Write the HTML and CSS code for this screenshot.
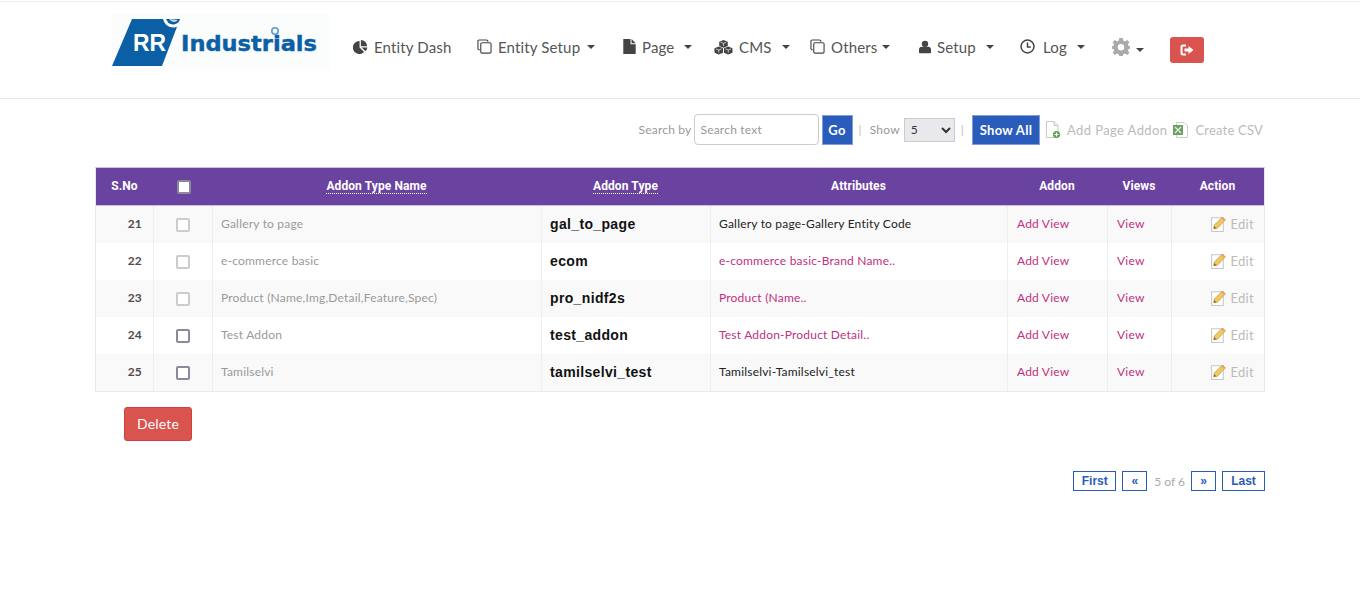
FILE: index.html
```html
<!DOCTYPE html>
<html>
	<head>
		<meta charset="UTF-8">
		<title>Page Addon</title>
		<link rel="stylesheet" href="styles.css">
	</head>
	<body>
		<header class="topbar">
			<a class="logo" href="#">
				<svg width="219" height="57" viewBox="0 0 219 57">
					<rect width="219" height="57" fill="#fbfcfc"/>
					<path d="M21 5H69L51 52H1Z" fill="#0b5fa5"/>
					<path d="M53 3Q55 12 62 12Q67 12 71 7" fill="none" stroke="#fff" stroke-width="3"/>
					<path d="M58 5Q60 8 63 8Q65 8 67 6Z" fill="#cfd8dd"/>
					<text x="22" y="37" class="logo-rr" textLength="33" lengthAdjust="spacingAndGlyphs">RR</text>
					<text x="70" y="37" class="logo-name" textLength="136" lengthAdjust="spacingAndGlyphs">Industrials</text>
					<rect x="159" y="21" width="4" height="4" fill="#fbfcfc"/>
					<circle cx="164" cy="17" r="3.2" fill="none" stroke="#5b9bd0" stroke-width="1.6"/>
				</svg>
			</a>
			<nav class="nav">
				<a href="#"><svg class="ico" viewBox="0 0 16 16"><path d="M7 2.2V9l4.800 4.800A6.900 6.900 0 1 1 7 2.200Z M8.400 1V7.600H15A6.700 6.700 0 0 0 8.400 1Z M9.200 9H15.400A7 7 0 0 1 13.200 13Z"/></svg>Entity Dash</a>
				<a href="#"><svg class="ico line" viewBox="0 0 16 16"><path d="M3 11.500H2.300A1.300 1.300 0 0 1 1 10.200V2.300A1.300 1.300 0 0 1 2.300 1H10.200A1.300 1.300 0 0 1 11.500 2.300V3"/><rect x="4" y="4" width="11" height="11" rx="1.400"/></svg>Entity Setup<i class="caret"></i></a>
				<a href="#"><svg class="ico doc" viewBox="2 1 12 14.500"><path d="M2 1H9V6H14V15.500H2Z M10 1L14 5H10Z"/></svg>Page<i class="caret wide"></i></a>
				<a href="#"><svg class="ico cubes" viewBox="0 0 20 16"><path d="M10 0.500L14.500 2.400V7L10 8.800L5.500 7V2.400Z M5 7.500L9.500 9.400V14L5 15.800L0.500 14V9.400Z M15 7.500L19.500 9.400V14L15 15.800L10.500 14V9.400Z"/><path d="M7 3L10 4.200L13 3M10 4.200V7M2 10L5 11.200L8 10M5 11.200V14M12 10L15 11.200L18 10M15 11.200V14" fill="none" stroke="#fff" stroke-width=".7"/></svg>CMS<i class="caret wide"></i></a>
				<a href="#"><svg class="ico line" viewBox="0 0 16 16"><path d="M3 11.500H2.300A1.300 1.300 0 0 1 1 10.200V2.300A1.300 1.300 0 0 1 2.300 1H10.200A1.300 1.300 0 0 1 11.500 2.300V3"/><rect x="4" y="4" width="11" height="11" rx="1.400"/></svg>Others<i class="caret tight"></i></a>
				<a href="#"><svg class="ico user" viewBox="1 .8 14 14.700"><circle cx="8" cy="4.500" r="3.700"/><path d="M2 15.500A1.500 1.500 0 0 1 1 14V11.500Q1 8.300 4 8H12Q15 8.300 15 11.500V14A1.500 1.500 0 0 1 14 15.500Z"/></svg>Setup<i class="caret wide"></i></a>
				<a href="#"><svg class="ico line clock" viewBox="0 0 16 16"><circle cx="8" cy="8" r="6.900"/><path d="M8 3.800V8.600H11.500"/></svg>Log<i class="caret wide"></i></a>
				<a href="#" class="gear"><svg class="ico gear-ico" viewBox="0 0 18 18"><path fill-rule="evenodd" d="M7.300 0H10.700L11.200 2.600L13 3.400L15.200 1.900L17.400 4.200L15.900 6.300L16.600 8L18 8.300V10.700L16.600 11L15.900 12.700L17.400 14.800L15.200 17L13 15.600L11.200 16.400L10.700 18H7.300L6.800 16.400L5 15.600L2.800 17L0.600 14.800L2.100 12.700L1.400 11L0 10.700V8.300L1.400 8L2.100 6.300L0.600 4.200L2.800 1.900L5 3.400L6.800 2.600ZM9 6A3.200 3.200 0 1 0 9 12.400A3.200 3.200 0 1 0 9 6Z"/></svg><i class="caret low"></i></a>
				<a href="#" class="logout"><svg width="14" height="12" viewBox="0 0 14 12"><path d="M6 1.500H3Q1.500 1.500 1.500 3V9Q1.500 10.500 3 10.500H6" fill="none" stroke="#fff" stroke-width="2"/><path d="M4.500 4.500H8.500V2L13.500 6L8.500 10V7.500H4.500Z" fill="#fff"/></svg></a>
			</nav>
		</header>

		<main class="content">
			<form class="tools" onsubmit="return false;">
				<label>Search by</label>
				<input type="text" class="search" placeholder="Search text">
				<button class="blue go">Go</button>
				<span class="sep">|</span>
				<label>Show</label>
				<select class="show"><option>5</option><option>10</option></select>
				<span class="sep">|</span>
				<button class="blue all">Show All</button>
				<a href="#" class="tool-link add"><svg width="17" height="18" viewBox="0 0 17 18"><path d="M2.500 .5H10L14 4.500V16.500H2.500Z" fill="#fff" stroke="#c8c8c8"/><path d="M10 .5V4.500H14" fill="#eee" stroke="#c8c8c8"/><circle cx="12.500" cy="13.500" r="3.500" fill="#5aa84a"/><path d="M10.500 13.500H14.500M12.500 11.500V15.500" stroke="#fff"/></svg>Add Page Addon</a>
				<a href="#" class="tool-link csv"><svg width="17" height="16" viewBox="0 0 17 16"><path d="M4.500 .5H12L15.500 4V15.500H4.500Z" fill="#fff" stroke="#ccc"/><rect x="1" y="3" width="10" height="10" fill="#6d9f63"/><path d="M3 5L9 11M9 5L3 11" stroke="#dfeedd" stroke-width="1.300"/></svg>Create CSV</a>
			</form>

			<table class="grid">
				<colgroup>
					<col class="c-no"><col class="c-chk"><col class="c-name"><col class="c-type"><col class="c-attr"><col class="c-addon"><col class="c-views"><col class="c-act">
				</colgroup>
				<thead>
					<tr>
						<th>S.No</th>
						<th class="head-chk"><span class="tick"></span></th>
						<th><a href="#">Addon Type Name</a></th>
						<th><a href="#">Addon Type</a></th>
						<th>Attributes</th>
						<th>Addon</th>
						<th>Views</th>
						<th>Action</th>
					</tr>
				</thead>
				<tbody>
					<tr>
						<td class="no">21</td><td class="chk"><span class="box off"></span></td><td class="name">Gallery to page</td><td class="code">gal_to_page</td><td class="attr">Gallery to page-Gallery Entity Code</td><td class="lnk"><a href="#">Add View</a></td><td class="lnk"><a href="#">View</a></td><td class="act"><span class="edit"><svg class="pencil" width="17" height="17" viewBox="0 0 16 16"><use href="#pencil"/></svg>Edit</span></td>
					</tr>
					<tr>
						<td class="no">22</td><td class="chk"><span class="box off"></span></td><td class="name">e-commerce basic</td><td class="code">ecom</td><td class="attr"><a href="#">e-commerce basic-Brand Name..</a></td><td class="lnk"><a href="#">Add View</a></td><td class="lnk"><a href="#">View</a></td><td class="act"><span class="edit"><svg class="pencil" width="17" height="17" viewBox="0 0 16 16"><use href="#pencil"/></svg>Edit</span></td>
					</tr>
					<tr>
						<td class="no">23</td><td class="chk"><span class="box off"></span></td><td class="name">Product (Name,Img,Detail,Feature,Spec)</td><td class="code">pro_nidf2s</td><td class="attr"><a href="#">Product (Name..</a></td><td class="lnk"><a href="#">Add View</a></td><td class="lnk"><a href="#">View</a></td><td class="act"><span class="edit"><svg class="pencil" width="17" height="17" viewBox="0 0 16 16"><use href="#pencil"/></svg>Edit</span></td>
					</tr>
					<tr>
						<td class="no">24</td><td class="chk"><span class="box"></span></td><td class="name">Test Addon</td><td class="code">test_addon</td><td class="attr"><a href="#">Test Addon-Product Detail..</a></td><td class="lnk"><a href="#">Add View</a></td><td class="lnk"><a href="#">View</a></td><td class="act"><span class="edit"><svg class="pencil" width="17" height="17" viewBox="0 0 16 16"><use href="#pencil"/></svg>Edit</span></td>
					</tr>
					<tr>
						<td class="no">25</td><td class="chk"><span class="box"></span></td><td class="name">Tamilselvi</td><td class="code">tamilselvi_test</td><td class="attr">Tamilselvi-Tamilselvi_test</td><td class="lnk"><a href="#">Add View</a></td><td class="lnk"><a href="#">View</a></td><td class="act"><span class="edit"><svg class="pencil" width="17" height="17" viewBox="0 0 16 16"><use href="#pencil"/></svg>Edit</span></td>
					</tr>
				</tbody>
			</table>

			<button class="delete">Delete</button>

			<div class="pager">
				<a href="#" class="end">First</a>
				<a href="#" class="arrow">«</a>
				<span>5 of 6</span>
				<a href="#" class="arrow">»</a>
				<a href="#" class="end">Last</a>
			</div>
		</main>

		<svg class="defs" width="0" height="0">
			<symbol id="pencil" viewBox="0 0 16 16">
				<path d="M1.500 2.500H12.500V15.500H1.500Z" fill="#fff" stroke="#c8c8c8"/>
				<path d="M4 9.500L11.500 2L14.500 4.500L7 12.500L3.500 13Z" fill="#f0c860" stroke="#c89a48" stroke-width=".7"/>
				<path d="M11.500 2L14.500 4.500L13.500 5.500L10.500 3Z" fill="#e89a70"/>
				<path d="M3.500 13L4 10.500L6 12.500Z" fill="#8a5a30"/>
			</symbol>
		</svg>
	</body>
</html>
```

FILE: styles.css
```css
html, body {
	margin : 0; padding : 0;
}
body {
	font-family : "Lato", "Open Sans", sans-serif;
	font-size : 12px;
	letter-spacing : .2px;
	color : #999;
	background : #fff;
}
a {
	text-decoration : none;
	color : #c0307f;
}
.defs {
	display : block;
}

.topbar {
	height : 96px;
	margin-top : 1px;
	border-top : solid 1px #eee;
	border-bottom : solid 1px #e7e7e7;
	display : flex;
	padding-left : 111px;
}
.logo {
	display : block;
	width : 219px;
	height : 57px;
	margin-top : 12px;
}
.logo svg {
	display : block;
}
.logo-rr {
	font : bold 24px "Liberation Sans", sans-serif;
	letter-spacing : 0;
	fill : #fff;
}
.logo-name {
	font : bold 21px "DejaVu Sans", sans-serif;
	letter-spacing : 0;
	fill : #0b5fa5;
	stroke : #0b5fa5;
	stroke-width : .4;
}
.nav {
	display : grid;
	grid-template-columns : 124px 146px 91px 96px 109px 101px 92px 58px 34px;
	margin-left : 23px;
	height : 90px;
	align-items : center;
}
.nav a {
	display : flex;
	align-items : center;
	font-size : 15px;
	letter-spacing : .15px;
	color : #555;
	height : 26px;
	margin-top : -1px;
}
.ico {
	width : 15px;
	height : 15px;
	margin-right : 6px;
	fill : #444;
	flex : none;
}
.ico.line {
	fill : none;
	stroke : #444;
	stroke-width : 1.200;
}
.ico.doc {
	width : 13px;
}
.ico.user {
	width : 12px;
	height : 14px;
}
.ico.cubes {
	width : 19px;
	height : 16px;
}
.ico.clock {
	margin-right : 8px;
	stroke-width : 1.600;
}
.gear-ico {
	width : 18px;
	height : 18px;
	fill : #aaa;
}
.caret {
	display : inline-block;
	margin-left : 7px;
	border-top : 4px solid #444;
	border-left : 4px solid transparent;
	border-right : 4px solid transparent;
}
.caret.wide {
	margin-left : 10px;
}
.caret.tight {
	margin-left : 5px;
}
.caret.low {
	margin-left : 0;
	margin-top : 6px;
}
.nav a.logout {
	width : 34px;
	height : 26px;
	background : #d9534f;
	border-radius : 3px;
	justify-content : center;
	margin-top : 6px;
}

.content {
	padding : 0 95px;
}
.tools {
	display : flex;
	justify-content : flex-end;
	align-items : center;
	height : 31px;
	margin : 15px 0 22px;
	padding-right : 2px;
	font-size : 12px;
}
.search {
	width : 125px;
	height : 31px;
	box-sizing : border-box;
	margin-left : 2px;
	padding : 0 6px;
	border : solid 1px #ccc;
	border-radius : 4px;
	font : 12px "Lato", sans-serif;
	letter-spacing : .2px;
}
.search::placeholder {
	color : #999;
}
.blue {
	background : #2a5cbb;
	color : #fff;
	border : solid 1px #7f9fdc;
	font : bold 13px "Lato", sans-serif;
	letter-spacing : .3px;
	height : 30px;
	padding : 0;
}
.go {
	width : 31px;
	margin-left : 3px;
}
.all {
	width : 68px;
}
.sep {
	margin : 0 8px 0 6px;
	color : #bbb;
}
.show {
	width : 51px;
	height : 24px;
	margin-left : 4px;
	background : #e9e9ed;
	border : solid 1px #ccc;
	font : 12px "Lato", sans-serif;
	color : #333;
	padding-left : 2px;
}
.tool-link {
	display : flex;
	align-items : center;
	color : #bbb;
	font-size : 13px;
	margin-left : 4px;
}
.tool-link.add {
	letter-spacing : .4px;
}
.tool-link.csv {
	letter-spacing : .2px;
	margin-left : 5px;
}
.tool-link svg {
	margin-right : 6px;
}

.grid {
	width : 1170px;
	table-layout : fixed;
	border-collapse : separate;
	border-spacing : 0;
	border : solid 1px #e9e9e9;
	border-top : solid 1px #c9c0dd;
}
.c-no { width : 57px; }
.c-chk { width : 59px; }
.c-name { width : 329px; }
.c-type { width : 169px; }
.c-attr { width : 297px; }
.c-addon { width : 100px; }
.c-views { width : 64px; }
.c-act { width : 93px; }
.grid th {
	height : 38px;
	padding : 0 0 1px;
	box-sizing : border-box;
	background : #6a429f;
	color : #fff;
	font : bold 12px "Roboto", "Liberation Sans", sans-serif;
	letter-spacing : .1px;
	text-align : center;
	border-bottom : solid 1px #c9c0dd;
}
.grid th a {
	color : #fff;
	border-bottom : dotted 1px #fff;
}
.grid td {
	height : 37px;
	padding : 0 8px 3px;
	box-sizing : border-box;
	border-left : solid 1px #eee;
	font-size : 12px;
}
.grid td:first-child {
	border-left : none;
}
.grid tbody tr:nth-child(odd) td {
	background : #f9f9f9;
}
.grid th.head-chk {
	line-height : 0;
	padding : 0 0 0 2px;
}
.tick {
	display : inline-block;
	width : 10px;
	height : 10px;
	background : #fff;
	border : solid 2px #8a8a9a;
	border-radius : 2px;
}
.grid td.no {
	text-align : right;
	padding-right : 11px;
	font-weight : bold;
	color : #554a4a;
}
.grid td.chk {
	text-align : center;
	line-height : 0;
	padding : 0;
}
.box {
	display : inline-block;
	width : 10px;
	height : 10px;
	border : solid 2px #8a8a9e;
	border-radius : 2px;
	background : #fff;
}
.box.off {
	border-color : #ccc;
}
.grid td.code {
	font : bold 14px "Liberation Sans", sans-serif;
	letter-spacing : .35px;
	color : #111;
	padding-bottom : 2px;
}
.grid td.attr {
	color : #222;
}
.grid td.lnk {
	padding-left : 9px;
}
.grid td.act {
	text-align : right;
	padding : 1px 10px 0 8px;
	color : #bbb;
}
.edit {
	display : inline-flex;
	align-items : center;
	font-size : 13px;
	letter-spacing : .3px;
}
.pencil {
	margin-right : 4px;
}

.delete {
	display : block;
	width : 68px;
	height : 34px;
	margin : 15px 0 0 29px;
	background : #d9534f;
	border : solid 1px #d43f3a;
	border-radius : 3px;
	color : #fff;
	font : 14px "Lato", sans-serif;
	letter-spacing : .2px;
	padding : 0 0 2px;
}
.pager {
	display : flex;
	justify-content : flex-end;
	align-items : center;
	gap : 6px;
	margin-top : 30px;
	font-size : 12px;
	letter-spacing : 0;
	color : #aaa;
}
.pager a {
	box-sizing : border-box;
	height : 20px;
	border : solid 1px #2a5cbb;
	color : #2a5cbb;
	font : bold 12px/18px "Liberation Sans", sans-serif;
	text-align : center;
}
.pager a.end {
	width : 43px;
}
.pager a.arrow {
	width : 25px;
}
.pager span {
	margin : 0 0 0 1px;
}
```
